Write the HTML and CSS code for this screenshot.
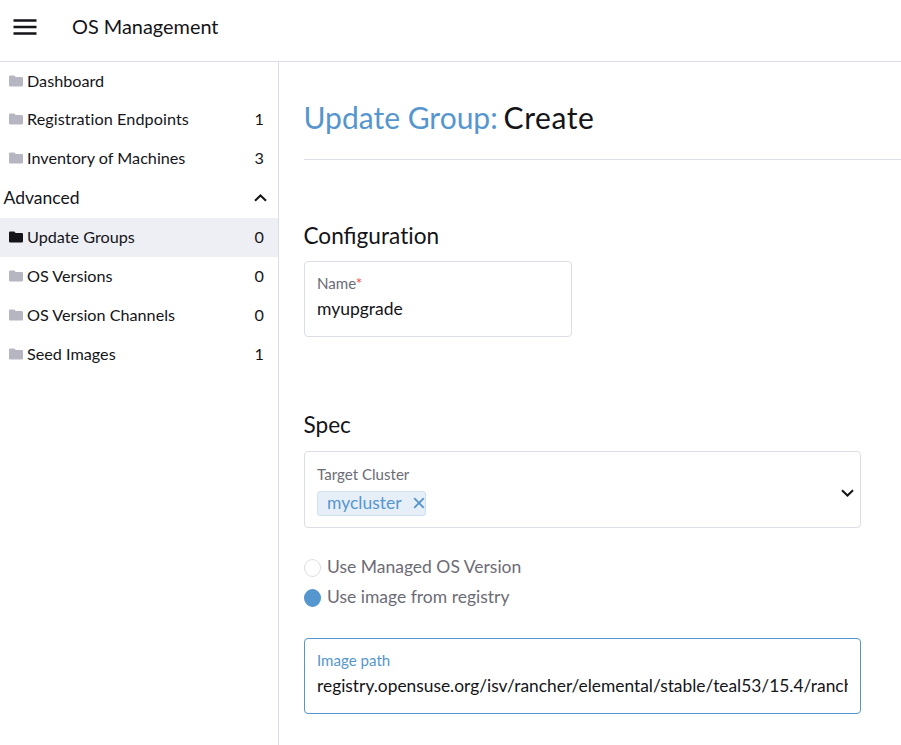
FILE: index.html
```html
<!DOCTYPE html>
<html lang="en">
<head>
<meta charset="utf-8">
<title>OS Management</title>
<link rel="stylesheet" href="styles.css">
</head>
<body>
<svg class="defs" aria-hidden="true">
  <symbol id="folder" viewBox="0 0 14 12"><path d="M1.2 0.5H5.2L6.7 2H12.8Q14 2 14 3.2V10.3Q14 11.5 12.8 11.5H1.2Q0 11.5 0 10.3V1.7Q0 .5 1.2 .5Z"/></symbol>
</svg>
<header class="header">
  <svg class="menu" viewBox="0 0 24 16"><path d="M.5 1.5H23.5M.5 8H23.5M.5 14.5H23.5"/></svg>
  <div class="product">OS Management</div>
</header>
<div class="body">
  <nav class="nav">
    <a class="item first"><svg class="folder"><use href="#folder"/></svg><span class="label">Dashboard</span></a>
    <a class="item"><svg class="folder"><use href="#folder"/></svg><span class="label wide">Registration Endpoints</span><span class="count">1</span></a>
    <a class="item"><svg class="folder"><use href="#folder"/></svg><span class="label">Inventory of Machines</span><span class="count">3</span></a>
    <div class="group"><span class="label">Advanced</span><svg class="chevron" viewBox="0 0 13 8"><path d="M1 6.8L6.5 1.5L12 6.8"/></svg></div>
    <a class="item active"><svg class="folder"><use href="#folder"/></svg><span class="label">Update Groups</span><span class="count">0</span></a>
    <a class="item"><svg class="folder"><use href="#folder"/></svg><span class="label">OS Versions</span><span class="count">0</span></a>
    <a class="item"><svg class="folder"><use href="#folder"/></svg><span class="label">OS Version Channels</span><span class="count">0</span></a>
    <a class="item"><svg class="folder"><use href="#folder"/></svg><span class="label">Seed Images</span><span class="count">1</span></a>
  </nav>
  <main class="main">
    <h1 class="title"><span class="link">Update Group:</span> <span class="action">Create</span></h1>
    <h2 class="heading">Configura<span class="plain">ti</span>on</h2>
    <div class="field name">
      <label class="caption">Name<span class="required">*</span></label>
      <div class="value">myupgrade</div>
    </div>
    <h2 class="heading spec">Spec</h2>
    <div class="field select">
      <div class="select-body">
        <label class="caption">Target Cluster</label>
        <div class="tag">mycluster<svg class="close" viewBox="0 0 12 12"><path d="M1.2 1.2L10.8 10.8M10.8 1.2L1.2 10.8"/></svg></div>
      </div>
      <svg class="chevron" viewBox="0 0 13 8"><path d="M1 1.2L6.5 6.5L12 1.2"/></svg>
    </div>
    <div class="radios">
      <div class="radio"><span class="dot"></span><span class="choice">Use Managed OS Version</span></div>
      <div class="radio"><span class="dot checked"></span><span class="choice">Use image from registry</span></div>
    </div>
    <div class="field focused">
      <label class="caption">Image path</label>
      <div class="value path">registry.opensuse.org/isv/rancher/elemental/stable/teal53/15.4/ranch</div>
    </div>
  </main>
</div>
</body>
</html>
```
FILE: styles.css
```css
* { box-sizing: border-box; }
body {
  margin: 0;
  height: 745px;
  overflow: hidden;
  display: flex;
  flex-direction: column;
  background: #fff;
  color: #141419;
  font-family: Lato, "Liberation Sans", sans-serif;
  font-size: 17.5px;
}
.defs { position: absolute; width: 0; height: 0; }
.header {
  height: 62px;
  flex: none;
  display: flex;
  align-items: flex-start;
  padding: 14px 0 0 13px;
  border-bottom: 1px solid #dcdee7;
}
.menu { width: 24px; height: 16px; margin-top: 5px; fill: none; stroke: #141419; stroke-width: 2.3; }
.product { margin-left: 35px; font-size: 19.9px; line-height: 24px; }
.body { flex: 1; display: flex; min-height: 0; }
.nav { width: 279px; flex: none; border-right: 1px solid #dcdee7; font-variant-ligatures: none; }
.item, .group { height: 39px; display: flex; align-items: center; }
.item { padding: 0 14px 0 9px; font-size: 16.2px; }
.item.first { height: 38px; }
.group { height: 40px; padding: 0 11.5px 0 3.5px; }
.label, .count { padding-bottom: 2px; }
.label { flex: 1; }
.wide { letter-spacing: .08px; }
.folder { width: 14px; height: 12px; margin: 0 4px 1px 0; fill: #b6b6c2; }
.active { background: #eeeff4; }
.active .folder { fill: #141419; }
.chevron { width: 13px; height: 8px; fill: none; stroke: #141419; stroke-width: 2; }
.main { flex: 1; min-width: 0; padding-left: 25px; }
.title {
  margin: 0;
  height: 98px;
  padding-top: 36px;
  border-bottom: 1px solid #dcdee7;
  font-size: 30px;
  font-weight: 400;
  line-height: 38px;
  text-indent: -.5px;
}
.link { color: #5696ce; }
.action { margin-left: -1.8px; letter-spacing: .6px; }
.heading { margin: 61px 0 10px; font-size: 22.6px; font-weight: 400; line-height: 30px; text-indent: -.5px; }
.heading.spec { margin-top: 73px; margin-bottom: 11px; }
.plain { font-variant-ligatures: none; }
.field {
  width: 557px;
  height: 76px;
  padding: 11px 12px;
  border: 1px solid #dcdee7;
  border-radius: 4px;
}
.field.name { width: 268px; }
.caption { display: block; font-size: 15.1px; line-height: 20px; color: #6c6c76; }
.required { color: #f64747; }
.value { margin-top: 5px; line-height: 22px; overflow: hidden; white-space: nowrap; }
.path { font-size: 17.38px; }
.select { height: 77px; display: flex; align-items: center; padding-right: 6px; }
.select-body { flex: 1; }
.tag {
  display: flex;
  align-items: center;
  width: 109px;
  height: 25px;
  margin-top: 7px;
  padding-left: 9px;
  border: 1px solid #cfe0f0;
  border-radius: 3px;
  background: #e6eff8;
  color: #5696ce;
  line-height: 21px;
  padding-bottom: 1px;
}
.close { width: 12px; height: 12px; margin-left: 11px; flex: none; fill: none; stroke: #5696ce; stroke-width: 1.9; }
.select .chevron { margin-top: 6px; }
.radios { margin: 25px 0; }
.radio { height: 30px; display: flex; align-items: center; color: #6c6c76; }
.choice { padding-bottom: 3px; }
.dot { width: 17px; height: 18px; margin-right: 6px; border: 1px solid #dcdee7; border-radius: 50%; }
.dot.checked { background: #5696ce; border-color: #5696ce; }
.focused { border-color: #5696ce; }
.focused .caption { color: #5696ce; }
```
